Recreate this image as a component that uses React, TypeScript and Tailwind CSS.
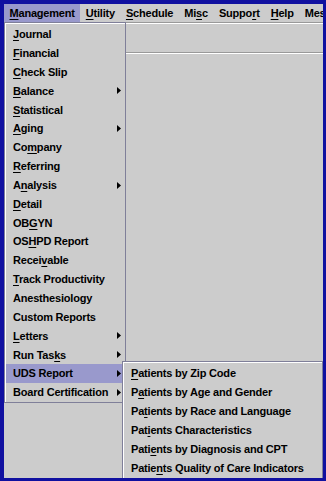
import React from 'react';

interface MenuEntry {
  label: string;
  u: number;
  sub?: boolean;
  active?: boolean;
}

const font = { fontFamily: '"Liberation Sans", Arial, sans-serif' };

const menuBar: MenuEntry[] = [
  { label: 'Management', u: 0, active: true },
  { label: 'Utility', u: 0 },
  { label: 'Schedule', u: 0 },
  { label: 'Misc', u: 2 },
  { label: 'Support', u: 5 },
  { label: 'Help', u: 0 },
  { label: 'Messages', u: -1 },
];

const management: MenuEntry[] = [
  { label: 'Journal', u: 0 },
  { label: 'Financial', u: 0 },
  { label: 'Check Slip', u: 0 },
  { label: 'Balance', u: 0, sub: true },
  { label: 'Statistical', u: 0 },
  { label: 'Aging', u: 0, sub: true },
  { label: 'Company', u: 2 },
  { label: 'Referring', u: 0 },
  { label: 'Analysis', u: 1, sub: true },
  { label: 'Detail', u: 0 },
  { label: 'OBGYN', u: 2 },
  { label: 'OSHPD Report', u: 2 },
  { label: 'Receivable', u: 5 },
  { label: 'Track Productivity', u: 0 },
  { label: 'Anesthesiology', u: -1 },
  { label: 'Custom Reports', u: -1 },
  { label: 'Letters', u: 0, sub: true },
  { label: 'Run Tasks', u: 7, sub: true },
  { label: 'UDS Report', u: -1, sub: true, active: true },
  { label: 'Board Certification', u: -1, sub: true },
];

const uds: MenuEntry[] = [
  { label: 'Patients by Zip Code', u: 0 },
  { label: 'Patients by Age and Gender', u: 1 },
  { label: 'Patients by Race and Language', u: 2 },
  { label: 'Patients Characteristics', u: 3 },
  { label: 'Patients by Diagnosis and CPT', u: 4 },
  { label: 'Patients Quality of Care Indicators', u: 5 },
];

function Mnemonic({ label, u }: { label: string; u: number }) {
  if (u < 0) return <span>{label}</span>;
  return (
    <span>
      {label.slice(0, u)}
      <span className="underline decoration-1 underline-offset-[2px]">{label[u]}</span>
      {label.slice(u + 1)}
    </span>
  );
}

function Arrow() {
  return (
    <svg width="4" height="7" viewBox="0 0 4 7" className="shrink-0">
      <path d="M0 0 L4 3.5 L0 7 Z" fill="#000" />
    </svg>
  );
}

export default function App() {
  return (
    <div
      className="w-[326px] h-[481px] bg-[#1010a0] pl-[4px] pt-[4px] pr-[3px] pb-[3px] text-[11px] font-bold tracking-[-0.2px] text-black"
      style={font}
    >
      <div className="relative h-full bg-[#cccccc] overflow-hidden">
        {/* menu bar */}
        <div className="flex h-[18px] whitespace-nowrap">
          {menuBar.map((m) => (
            <div
              key={m.label}
              className={`flex items-center px-[5.5px] ${m.active ? 'bg-[#9999cc]' : ''}`}
            >
              <Mnemonic label={m.label} u={m.u} />
            </div>
          ))}
        </div>
        <div className="h-[1px] bg-[#999999]" />
        <div className="h-[1px] bg-white" />

        {/* toolbar strip behind the menus */}
        <div className="h-[28px]" />
        <div className="h-[1px] bg-[#999999]" />
        <div className="h-[1px] bg-white" />

        {/* Management dropdown */}
        <div className="absolute left-0 top-[18px] w-[122px] border border-[#7f7f99] bg-[#cccccc]">
          <div className="border-t border-l border-white pt-[1px] pb-[0px]">
            {management.map((m) => (
              <div
                key={m.label}
                className={`flex items-center justify-between h-[18.85px] pl-[7px] pr-[4px] whitespace-nowrap ${
                  m.active ? 'bg-[#9999cc]' : ''
                }`}
              >
                <Mnemonic label={m.label} u={m.u} />
                {m.sub && <Arrow />}
              </div>
            ))}
          </div>
        </div>

        {/* UDS Report submenu */}
        <div className="absolute left-[118px] top-[357px] w-[201px] h-[140px] border border-[#7f7f99] bg-[#cccccc]">
          <div className="border-t border-l border-white h-full pt-[1px]">
            {uds.map((m) => (
              <div key={m.label} className="flex items-center h-[19px] pl-[7px] whitespace-nowrap">
                <Mnemonic label={m.label} u={m.u} />
              </div>
            ))}
          </div>
        </div>
      </div>
    </div>
  );
}
